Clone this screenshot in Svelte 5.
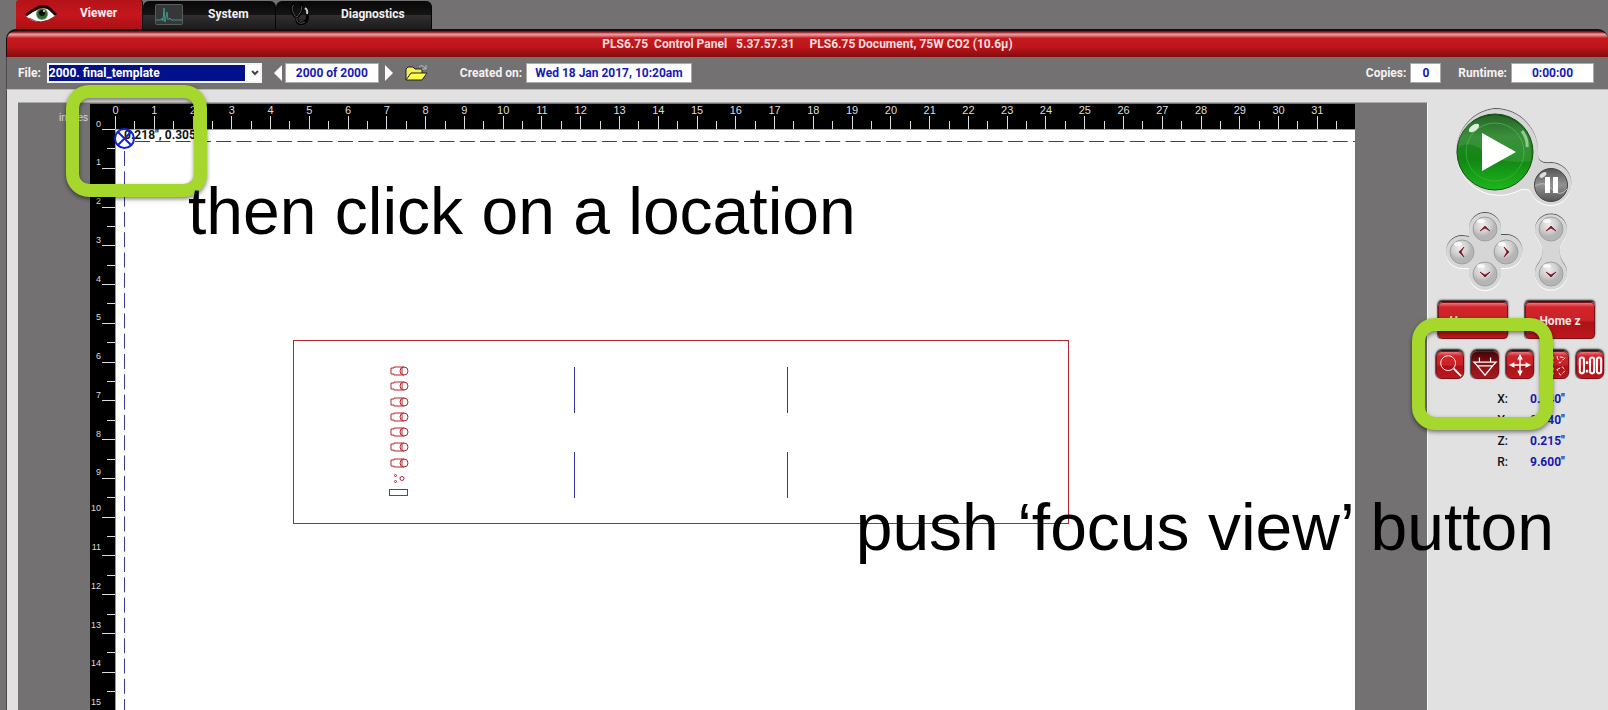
<script>
  const unit = 38.77;
  const origin = 25.5;
  const columns = Array.from({ length: 64 }, (_, i) => i / 2);
  const rows = Array.from({ length: 31 }, (_, i) => i / 2);
  const at = (n) => origin + n * unit;

  const parts = [267, 282, 298, 313, 328, 343, 359];
  const cutLines = [
    [484, 263], [697, 263], [484, 348], [697, 348]
  ];

  const readings = [
    ['X:', '0.340"'],
    ['Y:', '0.340"'],
    ['Z:', '0.215"'],
    ['R:', '9.600"']
  ];

  const pad = [
    { name: 'Move back', x: 61, y: 134, turn: 0 },
    { name: 'Move left', x: 38, y: 157, turn: 270 },
    { name: 'Move right', x: 82, y: 157, turn: 90 },
    { name: 'Move front', x: 61, y: 179, turn: 180 },
    { name: 'Z up', x: 127, y: 134, turn: 0 },
    { name: 'Z down', x: 127, y: 179, turn: 180 }
  ];

  let file = $state('2000. final_template');
  let position = $state('2000 of 2000');
  let copies = $state('0');
</script>

<div class="app">
  <nav class="tabs">
    <button class="tab active">
      <svg width="32" height="20" viewBox="0 0 32 20" aria-hidden="true">
        <path d="M1 13Q7 9 10 8Q20 2 27 9L31 12Q23 19 13 19Q6 18 1 13Z" fill="#fff" />
        <circle cx="17" cy="11" r="6" fill="#66995c" />
        <circle cx="17" cy="11" r="5" fill="#36612f" />
        <circle cx="17" cy="10" r="3" fill="#071006" />
        <circle cx="19" cy="8" r="1" fill="#eef" />
        <path d="M1 12Q8 7 14 4Q22 2 27 8L31 12" fill="none" stroke="#210507" stroke-width="3" />
        <path d="M4 15Q10 19 16 19Q24 18 29 14" fill="none" stroke="#732" />
      </svg>
      <span>Viewer</span>
    </button>
    <button class="tab system">
      <svg width="28" height="21" viewBox="0 0 28 21" aria-hidden="true">
        <rect x=".5" y=".5" width="27" height="20" rx="1" fill="#343839" stroke="#595b5c" />
        <path d="M1 16H6L7 14L8 17L9 4L10 18L12 8L13 16L15 14L16 16H27" fill="none" stroke="#42948b" />
      </svg>
      <span>System</span>
    </button>
    <button class="tab diagnostics">
      <svg width="20" height="22" viewBox="0 0 20 22" aria-hidden="true">
        <path d="M5 1Q1 1 2 6Q3 13 7 14Q12 10 12 3Q12 1 10 2M7 14V18Q9 22 14 20Q19 17 17 10" fill="none" stroke="#000" stroke-width="3" />
        <path d="M4 2Q1 3 3 9Q5 14 7 14Q12 9 12 3M7 15V18Q10 22 15 19" fill="none" stroke="#555" />
        <path d="M15 5Q18 7 17 11" fill="none" stroke="#ccc" stroke-width="2" />
      </svg>
      <span>Diagnostics</span>
    </button>
  </nav>

  <main class="window">
    <header class="title">PLS6.75  Control Panel   5.37.57.31     PLS6.75 Document, 75W CO2 (10.6µ)</header>

    <div class="toolbar">
      <label for="file">File:</label>
      <div class="picker">
        <select id="file" bind:value={file}><option>2000. final_template</option></select>
        <svg width="8" height="6" viewBox="0 0 8 6" aria-hidden="true"><path d="M1 1L4 4L7 1" fill="none" stroke="#444" stroke-width="2" /></svg>
      </div>
      <button class="step previous" aria-label="Previous file"><svg width="8" height="16" viewBox="0 0 8 16"><path d="M8 0V16L0 8Z" fill="#fff" /></svg></button>
      <input class="position" aria-label="File position" bind:value={position} />
      <button class="step next" aria-label="Next file"><svg width="8" height="16" viewBox="0 0 8 16"><path d="M0 0V16L8 8Z" fill="#fff" /></svg></button>
      <button class="open" aria-label="Open file">
        <svg width="24" height="18" viewBox="0 0 24 18">
          <path d="M1 16V5L3 3H8L10 5H17V9" fill="#f5ee55" stroke="#222" />
          <path d="M1 16L6 9H22L17 16Z" fill="#ffff4d" stroke="#222" />
          <path d="M14 3Q17 0 20 4M21 1V5H17" fill="none" stroke="#b9c0c6" />
        </svg>
      </button>
      <label class="created" for="created">Created on:</label>
      <input class="date" id="created" value="Wed 18 Jan 2017, 10:20am" readonly />
      <label class="copies-label" for="copies">Copies:</label>
      <input class="copies" id="copies" bind:value={copies} />
      <label class="runtime-label" for="runtime">Runtime:</label>
      <input class="runtime" id="runtime" value="0:00:00" readonly />
    </div>

    <div class="body">
      <section class="canvas" aria-label="Engraving field">
        <span class="unit">inches</span>
        <svg class="bed" viewBox="0 0 1265 724">
          <rect width="1265" height="724" fill="#000" />
          <rect x="25" y="25" width="1240" height="699" fill="#fff" />
          <g stroke="#ddd">
            {#each columns as n}
              <line x1={Math.floor(at(n)) + 0.5} x2={Math.floor(at(n)) + 0.5} y1={n % 1 ? 17 : 12} y2="25" />
            {/each}
            {#each rows as n}
              <line y1={Math.floor(at(n)) + 0.5} y2={Math.floor(at(n)) + 0.5} x1={n % 1 ? 17 : 12} x2="25" />
            {/each}
          </g>
          <path d="M25.5 25V724M25 25.5H1265" stroke="#999" fill="none" />
          {#each columns.filter((n) => n % 1 === 0) as n}
            <text class="across" x={at(n)} y="10">{n}</text>
          {/each}
          {#each rows.filter((n) => n % 1 === 0) as n}
            <text class="down" x="11" y={at(n) - (n < 10 ? 3 : 6)}>{n}</text>
          {/each}

          <g fill="none" stroke="#b3262c">
            <rect x="203.5" y="236.5" width="775" height="183" />
            {#each parts as y}
              <g transform="translate(301 {y})">
                <path d="M3 -4H13M3 4H13M3 -4V-3H0V3H3V4M11 -3V3" />
                <circle cx="13" cy="0" r="4" />
              </g>
            {/each}
            <circle cx="305.5" cy="371.5" r="1" />
            <circle cx="305.5" cy="377.5" r="1" />
            <circle cx="312" cy="374.5" r="2" />
            <rect x="299.5" y="385.5" width="18" height="6" />
          </g>
          <g stroke="#34349a">
            {#each cutLines as [x, y]}
              <line x1={x + 0.5} x2={x + 0.5} y1={y} y2={y + 46} />
            {/each}
          </g>
          <text class="coords" x="34" y="35">0.218", 0.305"</text>
          <path d="M45 37.5H1265M34.5 47V724" stroke="#39399b" stroke-width="1" stroke-dasharray="15 5.3" fill="none" />
          <g fill="none" stroke="#1422dc" stroke-width="2">
            <circle cx="34.5" cy="34.5" r="9.5" />
            <path d="M28 28L41 41M41 28L28 41" />
          </g>
        </svg>
      </section>

      <aside class="side">
        <svg class="controls" width="160" height="204" viewBox="0 0 160 204">
          <defs>
            <linearGradient id="green" x2="0" y2="1">
              <stop stop-color="#0c540e" /><stop offset=".3" stop-color="#258326" />
              <stop offset=".6" stop-color="#128714" /><stop offset="1" stop-color="#1db71b" />
            </linearGradient>
            <linearGradient id="steel" x2="0" y2="1">
              <stop stop-color="#555" /><stop offset=".5" stop-color="#929292" /><stop offset="1" stop-color="#555" />
            </linearGradient>
            <radialGradient id="knob" cx=".4" cy=".3">
              <stop stop-color="#ededed" /><stop offset=".7" stop-color="#cdcdcd" /><stop offset="1" stop-color="#b5b5b5" />
            </radialGradient>
            <filter id="lift" x="-.1" y="-.1" width="1.2" height="1.2">
              <feDropShadow dx="0" dy="-1" stdDeviation=".5" flood-color="#333" flood-opacity=".8" />
              <feDropShadow dx="0" dy="1" stdDeviation=".5" flood-color="#fff" />
            </filter>
          </defs>
          <g fill="#d6d6d6" filter="url(#lift)">
            <path d="M71 14A43 43 0 1 0 97 94Q105 93 107 97A21 21 0 1 0 127 68Q114 70 114 60A43 43 0 0 0 71 14Z" />
            <path d="M45 142V134A16 16 0 0 1 77 134V140H82A16 16 0 0 1 82 173H77V179A16 16 0 0 1 45 179V173H38A16 16 0 0 1 38 141Z" />
            <path d="M115 146A16 16 0 1 1 139 146Q132 157 139 168A16 16 0 1 1 115 168Q122 157 115 146Z" />
          </g>
          <g role="button" tabindex="0" aria-label="Start">
            <circle cx="71" cy="57" r="38" fill="url(#green)" stroke="#174b19" />
            <circle cx="71" cy="57" r="29" fill="none" stroke="#43b341" opacity=".7" />
            <path d="M34 53Q44 44 61 57T107 66Q110 25 71 20Q34 25 34 53Z" fill="#fff" opacity=".1" />
            <ellipse cx="50" cy="33" rx="6" ry="3" transform="rotate(-35 50 33)" fill="#d9efd9" />
            <path d="M98 36Q104 44 103 52" fill="none" stroke="#91cb90" stroke-width="3" />
            <path d="M58 38V76L92 57Z" fill="#fff" />
          </g>
          <g role="button" tabindex="0" aria-label="Pause">
            <circle cx="127" cy="90" r="16.5" fill="url(#steel)" stroke="#444" />
            <ellipse cx="119" cy="80" rx="4" ry="2" transform="rotate(-35 119 80)" fill="#ddd" />
            <path d="M111 91Q120 85 128 94T143 94" fill="none" stroke="#bbb" />
            <path d="M121 82H126V98H121ZM129 82H134V98H129Z" fill="#fff" />
          </g>
          {#each pad as p}
            <g role="button" tabindex="0" aria-label={p.name}>
              <circle cx={p.x} cy={p.y} r="12" fill="url(#knob)" stroke="#a0a0a0" />
              <ellipse cx={p.x - 4} cy={p.y - 8} rx="4" ry="2" fill="#f8f8f8" />
              <path d="M-5 2L0 -3L5 2L0 -1Z" transform="translate({p.x} {p.y}) rotate({p.turn})" fill="#7d1018" stroke="#7d1018" stroke-width=".7" />
            </g>
          {/each}
        </svg>

        <div class="homes">
          <button class="red home">Home xy</button>
          <button class="red home">Home z</button>
        </div>
        <div class="tools">
          <button class="red tool" aria-label="Zoom view">
            <svg viewBox="0 0 28 28"><circle cx="12" cy="12" r="8" /><path d="M18 18L26 26" stroke-width="2" /></svg>
          </button>
          <button class="red tool pressed" aria-label="Focus view">
            <svg viewBox="0 0 28 28"><path d="M8 6V11M20 6V11M2 11H26L22 15H6ZM5 14L14 25L23 14" stroke-width="1.3" /></svg>
          </button>
          <button class="red tool" aria-label="Relocate view">
            <svg viewBox="0 0 28 28"><path d="M14 6V22M6 14H22" stroke-width="1.5" /><path d="M14 2L11 8H17ZM14 26L11 20H17ZM2 14L8 11V17ZM26 14L20 11V17Z" fill="#fff" stroke="none" /></svg>
          </button>
          <button class="red tool" aria-label="Duplicate view">
            <svg viewBox="0 0 28 28"><path d="M5 5H12V12H5ZM5 17H12V24H5ZM16 5L19 12L25 6ZM16 19L22 16L25 20L20 25Z" stroke-dasharray="4 2" /></svg>
          </button>
          <button class="red tool" aria-label="Estimate time">
            <svg viewBox="0 0 28 28"><g stroke-width="2.2"><rect x="3" y="6" width="4.5" height="17" rx="2.2" /><rect x="14" y="6" width="4.5" height="17" rx="2.2" /><rect x="21.5" y="6" width="4.5" height="17" rx="2.2" /></g><path d="M9.5 10H12V13H9.5ZM9.5 19H12V22H9.5Z" fill="#fff" stroke="none" /></svg>
          </button>
        </div>
        <dl class="readings">
          {#each readings as [axis, value]}
            <dt>{axis}</dt><dd>{value}</dd>
          {/each}
        </dl>
      </aside>
    </div>
  </main>

  <div class="marker first"></div>
  <div class="marker second"></div>
  <p class="note where">then click on a location</p>
  <p class="note push">push ‘focus view’ button</p>
</div>

<style>
  :global(body) { margin: 0; background: #737172; }
  .app {
    position: relative;
    display: flex;
    flex-direction: column;
    height: 100vh;
    min-width: 1100px;
    overflow: hidden;
    background: #737172;
    font: 700 12px/16px Roboto, "Liberation Sans", sans-serif;
  }
  button { padding: 0; border: 0; background: none; font: inherit; cursor: pointer; }
  svg { display: block; }

  .tabs { display: flex; align-items: flex-end; height: 29px; padding-left: 16px; flex: none; }
  .tab {
    display: flex;
    align-items: center;
    box-sizing: border-box;
    height: 28px;
    padding-bottom: 2px;
    color: #f4f0f0;
    background: linear-gradient(#070707, #151515 50%, #303030 50%, #1c1c1c);
    border-right: 1px solid #050505;
    border-radius: 6px 6px 0 0;
  }
  .tab.active {
    width: 127px;
    height: 29px;
    padding: 0 0 4px 9px;
    gap: 23px;
    background: linear-gradient(#b41319, #c5161d 50%, #ab1015);
    border-radius: 3px 3px 0 0;
  }
  .system { width: 133px; padding-left: 12px; gap: 25px; }
  .diagnostics { width: 156px; padding-left: 14px; gap: 31px; }

  .window { display: flex; flex-direction: column; flex: 1; min-height: 0; padding-left: 6px; }
  .title {
    flex: none;
    box-sizing: border-box;
    height: 28px;
    padding-top: 5px;
    border: 1px solid #1b0b0c;
    border-width: 2px 0 0 1px;
    border-radius: 10px 10px 0 0;
    color: #f3dede;
    background: linear-gradient(#5f080c, #b4484d 2px, #f0a4a7 3px, #e07075 5px, #c6191e 7px, #bd151a 16px, #830c10);
    text-align: center;
    white-space: pre;
  }
  .toolbar {
    display: flex;
    align-items: center;
    flex: none;
    height: 33px;
    padding: 0 14px 0 11px;
    border-left: 1px solid #4b494a;
    border-bottom: 1px solid #bbb;
    color: #f3f3f3;
    box-sizing: border-box;
  }
  .picker { display: grid; align-items: center; width: 215px; margin-left: 6px; }
  .picker select, .picker svg { grid-area: 1 / 1; }
  .picker svg { justify-self: end; margin-right: 3px; pointer-events: none; }
  select, input {
    box-sizing: border-box;
    height: 20px;
    margin: 0;
    border: 1px solid #aaa;
    border-radius: 0;
    font: inherit;
  }
  select {
    width: 100%;
    appearance: none;
    padding: 0;
    border: 2px solid #f4f4f4;
    color: #fff;
    background: linear-gradient(90deg, #02108b 0 196px, #fff 196px);
  }
  input { padding: 0; color: #1719b8; background: #fff; text-align: center; }
  .previous { margin-left: 12px; }
  .position { width: 94px; margin: 0 6px 0 3px; }
  .open { margin-left: 12px; }
  .created { margin-left: 31px; }
  .date { width: 166px; margin-left: 4px; }
  .copies-label { margin-left: auto; }
  .copies { width: 31px; margin-left: 4px; }
  .runtime-label { margin-left: 17px; }
  .runtime { width: 83px; margin-left: 4px; }

  .body { display: flex; flex: 1; min-height: 0; border-left: 1px solid #4b494a; background: #e1e1e1; }
  .canvas {
    display: grid;
    grid-template-columns: 72px 1fr 72px;
    align-items: start;
    flex: 1;
    min-width: 0;
    margin: 12px 0 0 11px;
    padding-top: 1px;
    border-right: 1px solid #f8f8f8;
    border-top: 1px solid #aaa;
    overflow: hidden;
    background: #737172;
  }
  .unit { padding: 7px 2px 0 0; text-align: right; font: 10px/14px "Liberation Sans", sans-serif; color: #ddd; }
  .bed { width: 100%; height: auto; }
  text { font-family: "Liberation Sans", sans-serif; font-weight: 400; fill: #ddd; }
  .across { font-size: 11px; text-anchor: middle; }
  .down { font-family: "Liberation Sans Narrow", "Liberation Sans", sans-serif; font-size: 9px; text-anchor: end; }
  .coords { font: 700 12px Roboto, sans-serif; fill: #111; }

  .side { flex: none; width: 180px; box-sizing: border-box; padding: 5px 0 0; }
  .controls { margin-left: -4px; overflow: visible; }
  .homes { display: flex; gap: 17px; padding-left: 10px; margin-top: 3px; }
  .red {
    box-sizing: border-box;
    color: #f6e4e4;
    border: 1px solid #7c1116;
    border-radius: 4px;
    background: linear-gradient(#ef777b, #d1252b 4px, #ca2026 50%, #a91318 55%, #bd171c);
    box-shadow: 0 -2px 2px #1e1112, -1px 0 1px #666;
  }
  .home { width: 70px; height: 37px; }
  .tools { display: flex; gap: 7px; padding: 12px 0 0 8px; }
  .tool { width: 28px; height: 28px; border-radius: 6px; }
  .tool svg { width: 26px; height: 26px; fill: none; stroke: #fff; stroke-width: 1; }
  .pressed { background: linear-gradient(#42070a, #8c0f14 50%, #a51b20); }
  .readings { display: grid; grid-template-columns: 80px 1fr; column-gap: 22px; margin: 10px 0 0; line-height: 20px; row-gap: 1px; }
  dt { text-align: right; font-weight: 500; color: #111; }
  dd { margin: 0; color: #1719b0; }

  .marker {
    position: absolute;
    box-sizing: border-box;
    width: 141px;
    height: 112px;
    border: 13px solid #a5d72d;
    border-radius: 23px;
    filter: drop-shadow(0 2px 2px rgb(0 0 0 / .5));
    pointer-events: none;
  }
  .first { left: 66px; top: 85px; }
  .second { right: 55px; top: 318px; }
  .note { position: absolute; margin: 0; color: #000; font: 66px/76px "Liberation Sans", sans-serif; white-space: nowrap; pointer-events: none; }
  .where { left: 188px; top: 173px; }
  .push { right: 54px; top: 489px; }
</style>
